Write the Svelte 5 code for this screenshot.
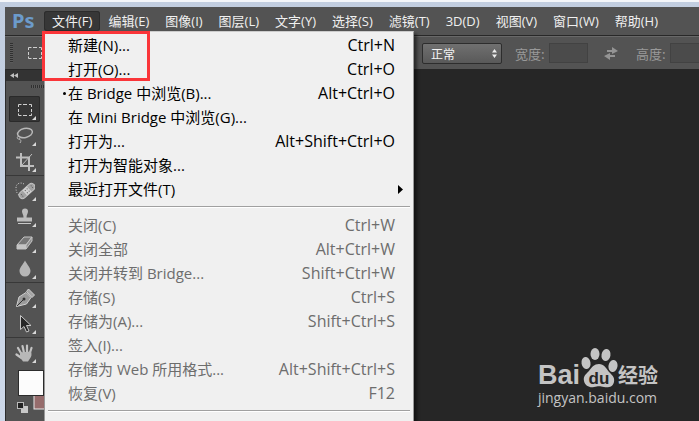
<script lang="ts">
  interface MenuItem { label: string; keys?: string; off?: boolean; sub?: boolean; mark?: boolean; }

  const menus = ['编辑(E)', '图像(I)', '图层(L)', '文字(Y)', '选择(S)', '滤镜(T)', '3D(D)', '视图(V)', '窗口(W)', '帮助(H)'];

  const groups: MenuItem[][] = [
    [
      { label: '新建(N)...', keys: 'Ctrl+N' },
      { label: '打开(O)...', keys: 'Ctrl+O' },
      { label: '在 Bridge 中浏览(B)...', keys: 'Alt+Ctrl+O', mark: true },
      { label: '在 Mini Bridge 中浏览(G)...' },
      { label: '打开为...', keys: 'Alt+Shift+Ctrl+O' },
      { label: '打开为智能对象...' },
      { label: '最近打开文件(T)', sub: true },
    ],
    [
      { label: '关闭(C)', keys: 'Ctrl+W', off: true },
      { label: '关闭全部', keys: 'Alt+Ctrl+W', off: true },
      { label: '关闭并转到 Bridge...', keys: 'Shift+Ctrl+W', off: true },
      { label: '存储(S)', keys: 'Ctrl+S', off: true },
      { label: '存储为(A)...', keys: 'Shift+Ctrl+S', off: true },
      { label: '签入(I)...', off: true },
      { label: '存储为 Web 所用格式...', keys: 'Alt+Shift+Ctrl+S', off: true },
      { label: '恢复(V)', keys: 'F12', off: true },
    ],
  ];

  const toolGroups = [
    ['marquee', 'lasso', 'crop'],
    ['heal', 'stamp', 'eraser', 'drop'],
    ['pen', 'select'],
    ['hand'],
  ];

  let active = $state('marquee');
  let mode = $state('正常');
</script>

{#snippet icon(name: string)}
  <svg class="icon" viewBox="0 0 20 20" aria-hidden="true">
    {#if name === 'marquee'}
      <path d="M3.5 7V4.500h3M8 4.500h4M14 4.500h2.500V7M16.500 9v3M16.500 13.500v2H14M12 15.500H8M6.500 15.500h-3v-2M3.500 12V9" fill="none" stroke="#d0d0d0" />
    {:else if name === 'lasso'}
      <ellipse cx="10" cy="7" rx="7.5" ry="4.5" transform="rotate(-12 10 7)" fill="none" stroke="#b8b8b8" stroke-width="1.5" />
      <path d="M3.5 10c-2 1-1.5 3.5.5 3 2-.5 1.5-3-.5-3m.5 3c2 .5 2.500 2 1 4" fill="none" stroke="#b8b8b8" />
    {:else if name === 'crop'}
      <path d="M6 1v13h13M1 5.500h13V19" fill="none" stroke="#bebebe" stroke-width="2" />
      <path d="M7 13l10-11" stroke="#bebebe" />
    {:else if name === 'heal'}
      <path d="M9 3C6 1 1 2 1 7c0 5 2 6 4 8" fill="none" stroke="#d0d0d0" stroke-dasharray="1 1.5" />
      <g transform="rotate(-42 12 10)">
        <rect x="2.5" y="6.5" width="19" height="7" rx="3.5" fill="#a2a2a2" stroke="#c4c4c4" />
        <rect x="9" y="6.5" width="6" height="7" fill="#d0d0d0" />
        <path d="M10.5 8.500h1M13 8.500h1M10.500 11.500h1M13 11.500h1M5 9h1M5 11h1M18 9h1M18 11h1" stroke="#555" />
      </g>
    {:else if name === 'stamp'}
      <path d="M7 4.500a3 3 0 0 1 6 0c0 2-1.500 3-1.500 6H17v4H2v-4h6.500c0-3-1.500-4-1.500-6z" fill="#bcbcbc" />
      <path d="M3 16.500h13" stroke="#c8c8c8" />
    {:else if name === 'eraser'}
      <path d="M2 12L9 4h8l-6 8z" fill="#777" stroke="#c6c6c6" />
      <path d="M2 12h9v4H2z" fill="#c4c4c4" stroke="#c4c4c4" />
      <path d="M11 12l6-8v4l-6 8z" fill="#909090" stroke="#c4c4c4" />
    {:else if name === 'drop'}
      <path d="M10 1.500c2 4 5.500 7 5.500 10.500a5.500 5.500 0 0 1-11 0C4.500 8.500 8 5.500 10 1.500z" fill="#b6b6b6" />
    {:else if name === 'pen'}
      <path d="M1.500 18.500L4 9l7-4.500 5 5-4.500 6.500z" fill="#9a9a9a" stroke="#cfcfcf" />
      <path d="M11.500 3.500l2-2.500 6 6-2.500 2.500z" fill="#a4a4a4" stroke="#cfcfcf" />
      <path d="M2 18l6-6" stroke="#333" />
      <circle cx="9" cy="11" r="1.5" fill="#333" />
    {:else if name === 'select'}
      <path d="M5.500 1.500v14l3.500-3 2.500 5.500 2.500-1-2.500-5.500h4.500z" fill="#282828" stroke="#c6c6c6" />
    {:else if name === 'hand'}
      <path d="M3 5l3.500 6M7.500 3l1.500 7M12 2.500V10M16.500 5l-2 6M1.500 11.500l5 3.500" fill="none" stroke="#c2c2c2" stroke-width="2.2" stroke-linecap="round" />
      <path d="M5 9.500l11-1c1 3 .5 5-1 7l-2 3H8L5 14z" fill="#b8b8b8" />
    {/if}
  </svg>
{/snippet}

<div class="window">
  <nav class="menubar">
    <span class="logo">Ps</span>
    <div class="file">
      <button class="top open" aria-haspopup="true" aria-expanded="true">文件(F)</button>
      <div class="menu" role="menu">
        {#each groups as group}
          <div class="group">
            {#each group as item}
              <button class="item" class:mark={item.mark} role="menuitem" disabled={item.off}>
                <span>{item.label}</span>
                {#if item.keys}<span class="keys">{item.keys}</span>{/if}
                {#if item.sub}
                  <svg class="sub" viewBox="0 0 5 9"><path d="M0 0l5 4.500L0 9z" /></svg>
                {/if}
              </button>
            {/each}
          </div>
          <hr />
        {/each}
      </div>
      <div class="highlight"></div>
    </div>
    {#each menus as m}
      <button class="top">{m}</button>
    {/each}
  </nav>

  <div class="options">
    <div class="preset">
      <span class="grip"></span>
      {@render icon('marquee')}
    </div>
    <div class="select">
      <select bind:value={mode} aria-label="样式">
        <option>正常</option>
        <option>固定比例</option>
        <option>固定大小</option>
      </select>
      <svg viewBox="0 0 5 9"><path d="M0 3.500L2.500 0 5 3.500zM0 5.500L2.500 9 5 5.500z" /></svg>
    </div>
    <label for="w">宽度:</label>
    <input id="w" type="text" disabled />
    <button class="swap" aria-label="交换高度和宽度" disabled>
      <svg viewBox="0 0 14 13"><path d="M3 3h5V0l6 4-6 3V5H3zM11 10H6v3L0 9l6-3v2h5z" /></svg>
    </button>
    <label for="h">高度:</label>
    <input id="h" type="text" disabled />
  </div>

  <div class="work">
    <aside class="tools">
      <button class="collapse" aria-label="折叠">
        <svg viewBox="0 0 8 5"><path d="M4 0v5L0 2.500zM8 0v5L4 2.500z" /></svg>
      </button>
      <span class="dots"></span>
      {#each toolGroups as group}
        <div class="toolset">
          {#each group as t}
            <button class="tool" class:active={active === t} onclick={() => (active = t)} aria-label={t}>
              {@render icon(t)}
            </button>
          {/each}
        </div>
      {/each}
      <svg class="swatches" viewBox="0 0 40 44" aria-hidden="true">
        <rect x="25" y="16" width="24" height="24" fill="#966c6c" stroke="#e8e8e8" />
        <rect x="9.5" y="1.5" width="25" height="25" fill="#fcfcfc" stroke="#2c2c2c" />
        <rect x="12.5" y="37.5" width="6" height="6" fill="#c8c8c8" stroke="#c8c8c8" />
        <rect x="8.5" y="33.5" width="6" height="6" fill="#222" stroke="#bbb" />
      </svg>
    </aside>

    <main class="canvas">
      <div class="brand">
        <div class="brand-row">
          <span class="bai">Bai</span>
          <svg class="paw" viewBox="0 0 38 40">
            <ellipse cx="6" cy="15" rx="4.5" ry="6" transform="rotate(-10 6 15)" />
            <ellipse cx="15" cy="6" rx="4.5" ry="6" />
            <ellipse cx="26" cy="7" rx="4.5" ry="6" transform="rotate(10 26 7)" />
            <ellipse cx="33" cy="18" rx="4.5" ry="6" transform="rotate(10 33 18)" />
            <path d="M19 16c5 0 7 4 10 8 3 3 6 5 5 10s-6 6-10 5c-4-1-6-1-10 0s-9-1-10-6 2-7 5-10c3-4 5-7 10-7z" />
            <text x="19" y="36" text-anchor="middle">du</text>
          </svg>
          <span class="jy">经验</span>
        </div>
        <span class="url">jingyan.baidu.com</span>
      </div>
    </main>
  </div>
</div>

<style>
  :global(body) { margin: 0; background: #c9d5e6; }
  .window {
    display: flex;
    flex-direction: column;
    height: 100vh;
    box-sizing: border-box;
    padding: 5px 0 0 5px;
    overflow: hidden;
    border-top: 2px solid #f4f6f9;
    background: linear-gradient(#c2cee0, #cdd8e9);
    font-family: "Open Sans", "Noto Sans CJK SC", sans-serif;
  }
  button { font: inherit; border: 0; padding: 0; background: none; color: inherit; }

  .menubar {
    display: flex;
    align-items: center;
    flex-shrink: 0;
    height: 28px;
    background: #535353;
    border-bottom: 1px solid #282828;
    font-size: 13px;
    color: #f0f0f0;
    white-space: nowrap;
  }
  .logo {
    width: 39px;
    box-sizing: border-box;
    padding-left: 7px;
    font-size: 20px;
    line-height: 28px;
    font-weight: 700;
    font-family: "Noto Sans", sans-serif;
    color: #6c9bcb;
  }
  .file { position: relative; }
  .top {
    height: 20px;
    padding: 0 8px;
    line-height: 18px;
    border-radius: 3px;
  }
  .open { background: #373737; box-shadow: inset 0 0 0 1px #2c2c2c; }

  .menu {
    position: absolute;
    z-index: 2;
    top: 20px;
    left: 0;
    width: 370px;
    box-sizing: border-box;
    padding: 1px 2px 20px;
    background: #f0f0f0;
    border: 1px solid #999;
    border-top-color: #ccc;
    box-shadow: 3px 3px 3px rgba(0,0,0,0.5);
    font-size: 15px;
    color: #000;
  }
  .item {
    position: relative;
    display: flex;
    align-items: center;
    justify-content: space-between;
    width: 100%;
    height: 24px;
    padding: 0 16px 0 21px;
    line-height: 24px;
  }
  .item:disabled { color: #6d6d6d; }
  .keys { font-size: 16px; }
  .mark::before {
    content: '';
    position: absolute;
    left: 16px;
    top: 11px;
    width: 3px;
    height: 3px;
    border-radius: 50%;
    background: #000;
  }
  .sub { position: absolute; right: 8px; width: 5px; height: 9px; }
  hr {
    height: 1px;
    margin: 5px 1px;
    border: 0;
    border-top: 1px solid #a0a0a0;
    background: #fff;
  }
  .highlight {
    position: absolute;
    z-index: 3;
    top: 20px;
    left: -2px;
    width: 108px;
    height: 50px;
    box-sizing: border-box;
    border: 3px solid #fa3539;
    pointer-events: none;
  }

  .options {
    display: flex;
    align-items: center;
    flex-shrink: 0;
    height: 33px;
    box-sizing: border-box;
    border-top: 1px solid #686868;
    background: #535353;
    font-size: 13px;
    color: #999;
  }
  .preset {
    display: flex;
    align-items: center;
    flex-shrink: 0;
    gap: 12px;
    width: 412px;
    padding-left: 5px;
  }
  .grip {
    width: 3px;
    height: 20px;
    background: repeating-linear-gradient(#303030 0 1px, #5c5c5c 1px 2px);
  }
  .icon { width: 20px; height: 20px; }
  .select { position: relative; display: flex; align-items: center; margin-right: 13px; }
  .select svg { position: absolute; right: 5px; width: 5px; height: 9px; fill: #eee; pointer-events: none; }
  select {
    appearance: none;
    width: 80px;
    height: 21px;
    padding: 0 8px;
    border: 1px solid #2d2d2d;
    border-radius: 2px;
    background: linear-gradient(#707070, #595959);
    font: 12px "Noto Sans CJK SC", sans-serif;
    color: #f4f4f4;
  }
  label { width: 34px; flex-shrink: 0; font-family: "Noto Sans CJK SC", sans-serif; }
  input {
    width: 39px;
    height: 20px;
    box-sizing: border-box;
    padding: 0;
    flex-shrink: 0;
    border: 1px solid #424242;
    background: #4b4b4b;
  }
  .swap { width: 14px; flex-shrink: 0; margin: 0 18px 0 16px; }
  .swap svg { display: block; width: 14px; height: 13px; fill: #949494; }

  .work { display: flex; flex: 1; min-height: 0; }
  .tools {
    display: flex;
    flex-direction: column;
    flex-shrink: 0;
    width: 60px;
    box-sizing: border-box;
    border-left: 1px solid #2d2d2d;
    background: #535353;
  }
  .collapse {
    display: flex;
    align-items: center;
    height: 12px;
    padding-left: 4px;
    background: #333;
    border-top: 1px solid #282828;
  }
  .collapse svg { width: 8px; height: 5px; fill: #c0c0c0; }
  .dots {
    width: 30px;
    height: 3px;
    margin: 4px 0 8px 25px;
    background: repeating-linear-gradient(90deg, #303030 0 1px, #5c5c5c 1px 2px);
  }
  .toolset { display: flex; flex-direction: column; padding-left: 3px; }
  .toolset + .toolset { border-top: 1px solid #383838; margin-top: 1px; padding-top: 1px; }
  .tool {
    position: relative;
    width: 31px;
    height: 26px;
    padding: 2px 0 0;
    line-height: 0;
    border-radius: 2px;
  }
  .tool::after {
    content: '';
    position: absolute;
    right: 4px;
    bottom: 2px;
    border-left: 4px solid transparent;
    border-bottom: 4px solid #d8d8d8;
  }
  .active { background: #363636; box-shadow: inset 0 0 0 1px #2a2a2a; }
  .swatches { width: 40px; height: 44px; margin: 4px 0 0 3px; }

  .canvas {
    display: flex;
    flex: 1;
    align-items: flex-end;
    justify-content: flex-end;
    background: #262626;
  }
  .brand { padding: 0 41px 13px 0; color: #c4c4c4; }
  .brand-row { display: flex; align-items: flex-end; height: 42px; }
  .bai { font: 700 27px/26px "Liberation Sans", sans-serif; }
  .paw { width: 38px; height: 40px; fill: #c4c4c4; }
  .paw text { font: 700 17px "Liberation Sans", sans-serif; fill: #262626; }
  .jy { font: 700 20px/26px "Noto Sans CJK SC", sans-serif; }
  .url { display: block; font-size: 14px; line-height: 20px; }
</style>
